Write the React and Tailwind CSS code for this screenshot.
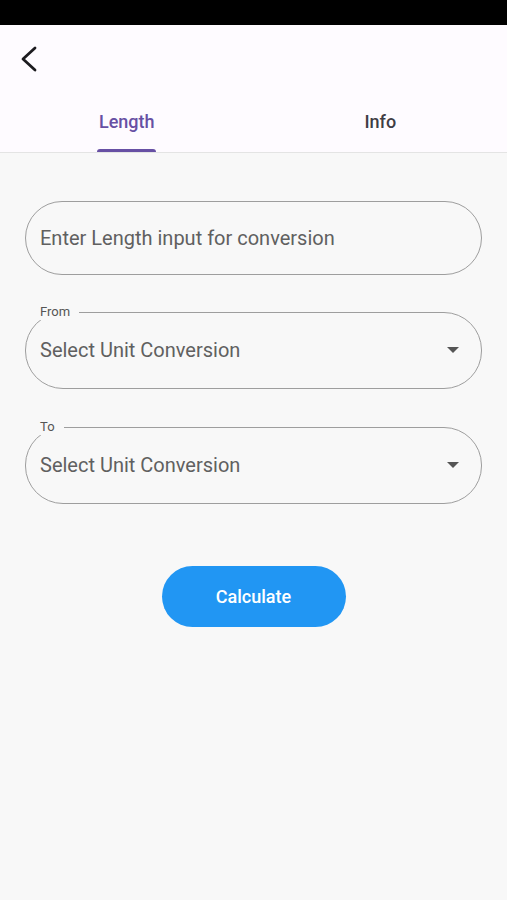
import React, { useState } from 'react';

const SelectField = ({ label }) => (
    <fieldset className="mx-[25px] border border-[#9e9e9e] rounded-[38px] p-0 min-w-0">
        <legend className="ml-[10px] pl-[4px] pr-[9px] text-[13px] leading-[16px] text-[#555]">
            {label}
        </legend>
        <div className="h-[68px] pb-[8px] pl-[14px] pr-[22px] flex items-center justify-between">
            <span className="text-[20px] text-[#606060]">Select Unit Conversion</span>
            <svg width="12" height="6" viewBox="0 0 12 6">
                <path d="M0 0 L12 0 L6 6 Z" fill="#555" />
            </svg>
        </div>
    </fieldset>
);

const App = () => {
    const [tab, setTab] = useState('length');
    const tabs = [
        { id: 'length', label: 'Length' },
        { id: 'info', label: 'Info' },
    ];

    return (
        <div className="w-[507px] h-[900px] flex flex-col bg-[#f8f8f8] font-['Roboto',sans-serif]">
            {/* status bar */}
            <div className="h-[25px] bg-black shrink-0"></div>

            {/* app bar + tabs */}
            <header className="bg-[#fefbff] border-b border-[#e4e4e4]">
                <div className="h-[70px] flex items-center pl-[20px]">
                    <svg width="18" height="26" viewBox="0 0 18 26" className="mt-[-2px]">
                        <path d="M15 2 L3 13 L15 24" fill="none" stroke="#1c1b1f" strokeWidth="2.8" strokeLinecap="round" strokeLinejoin="round" />
                    </svg>
                </div>
                <nav className="h-[57px] flex">
                    {tabs.map((t) => (
                        <button
                            key={t.id}
                            onClick={() => setTab(t.id)}
                            className="flex-1 flex flex-col items-center pt-[16px]"
                        >
                            <span
                                className={`text-[18px] leading-[21px] font-medium ${
                                    tab === t.id ? 'text-[#6750a4]' : 'text-[#3f3d44]'
                                }`}
                            >
                                {t.label}
                            </span>
                            {tab === t.id && (
                                <span className="mt-auto h-[3px] w-[59px] bg-[#6750a4] rounded-t-[3px]"></span>
                            )}
                        </button>
                    ))}
                </nav>
            </header>

            <main className="flex flex-col pt-[48px]">
                <div className="mx-[25px] h-[74px] border border-[#9e9e9e] rounded-full flex items-center pl-[14px]">
                    <span className="text-[20px] text-[#606060]">Enter Length input for conversion</span>
                </div>

                <div className="mt-[29px]">
                    <SelectField label="From" />
                </div>
                <div className="mt-[30px]">
                    <SelectField label="To" />
                </div>

                <div className="flex justify-center mt-[62px]">
                    <button className="w-[184px] h-[61px] rounded-full bg-[#2196f3] text-white text-[18px] font-medium">
                        Calculate
                    </button>
                </div>
            </main>
        </div>
    );
};

export default App;
